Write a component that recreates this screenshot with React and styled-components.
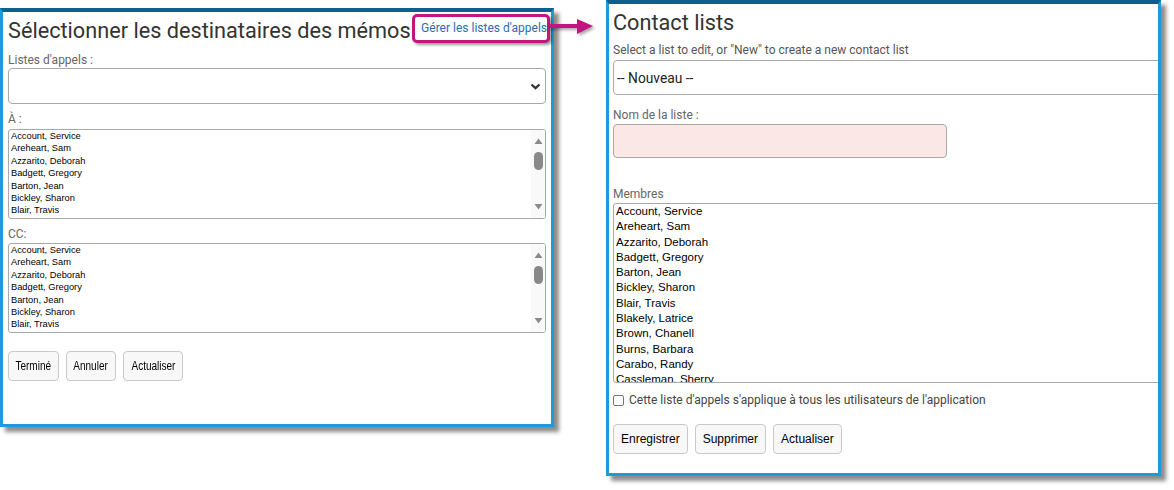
import React from "react";
import styled, { createGlobalStyle } from "styled-components";

const Global = createGlobalStyle`
  html, body { margin: 0; padding: 0; background: #fff; }
  * { box-sizing: border-box; }
`;

const Canvas = styled.div`
  position: relative;
  width: 1174px;
  height: 490px;
  display: flex;
  align-items: flex-start;
  overflow: hidden;
  font-family: Roboto, "Liberation Sans", sans-serif;
`;

const Panel = styled.section`
  display: flex;
  flex-direction: column;
  align-items: flex-start;
  width: ${(p) => p.$w}px;
  height: ${(p) => p.$h}px;
  margin-top: ${(p) => p.$top}px;
  margin-left: ${(p) => p.$left}px;
  padding: 0 ${(p) => p.$padR}px 0 ${(p) => p.$padL}px;
  background: #fff;
  border: 3px solid #1c9bd8;
  border-top: 4px solid #0d5f8e;
  box-shadow: 5px 5px 4px rgba(0, 0, 0, 0.45);
  overflow: ${(p) => (p.$clip ? "hidden" : "visible")};
`;

const Header = styled.div`
  display: flex;
  justify-content: space-between;
  align-items: flex-start;
  align-self: stretch;
`;

const Title = styled.h1`
  margin: ${(p) => p.$mt}px 0 0 0;
  font-family: Roboto, sans-serif;
  font-weight: 400;
  font-size: 21.7px;
  line-height: 27px;
  color: #333;
  white-space: nowrap;
`;

const Highlight = styled.span`
  display: inline-block;
  margin: 2px -4px 0 0;
  padding: 0 0 4px 6px;
  border: 3px solid #c3157f;
  border-radius: 5px;
  box-shadow: 2px 2px 3px rgba(0, 0, 0, 0.4);
  background: #fff;
  position: relative;
  z-index: 2;
`;

const Link = styled.a`
  font-family: Roboto, sans-serif;
  font-size: 12px;
  line-height: 14px;
  color: #2a6db5;
  text-decoration: none;
  white-space: nowrap;
`;

const Label = styled.div`
  margin-top: ${(p) => p.$mt}px;
  font-family: Roboto, sans-serif;
  font-size: 12px;
  line-height: 15px;
  color: ${(p) => p.$color || "#666"};
  white-space: nowrap;
`;

const Select = styled.div`
  margin-top: ${(p) => p.$mt}px;
  width: ${(p) => p.$w}px;
  height: ${(p) => p.$h}px;
  flex-shrink: 0;
  display: flex;
  align-items: center;
  justify-content: space-between;
  padding: 0 4px 0 3px;
  border: 1px solid #a9a9a9;
  border-radius: 4px;
  background: #fff;
  font-family: Roboto, sans-serif;
  font-size: 13.8px;
  color: #222;
`;

const TextInput = styled.div`
  margin-top: ${(p) => p.$mt}px;
  width: ${(p) => p.$w}px;
  height: ${(p) => p.$h}px;
  flex-shrink: 0;
  border: 1px solid #a9a9a9;
  border-radius: 4px;
  background: #fbe7e5;
`;

const ListBox = styled.div`
  margin-top: ${(p) => p.$mt}px;
  width: ${(p) => p.$w}px;
  height: ${(p) => p.$h}px;
  flex-shrink: 0;
  display: flex;
  border: 1px solid #a9a9a9;
  border-radius: 3px;
  background: #fff;
  overflow: hidden;
`;

const Items = styled.div`
  flex: 1;
  padding-left: 2px;
  overflow: hidden;
  font-family: "Liberation Sans", Arial, sans-serif;
  font-size: ${(p) => p.$fs}px;
  line-height: ${(p) => p.$lh}px;
  color: #000;
`;

const Item = styled.div`
  white-space: nowrap;
`;

const Track = styled.div`
  width: 14px;
  display: flex;
  flex-direction: column;
  align-items: center;
  padding: 8px 0 8px 0;
  background: #f9f9f9;
`;

const Thumb = styled.div`
  width: 9px;
  height: 18px;
  margin-top: 8px;
  border-radius: 5px;
  background: #898989;
`;

const Spacer = styled.div`
  flex: 1;
`;

const ButtonRow = styled.div`
  margin-top: ${(p) => p.$mt}px;
  display: flex;
  gap: 7px;
`;

const Button = styled.button`
  height: 30px;
  ${(p) => (p.$w ? `width: ${p.$w}px;` : "")}
  padding: 0 ${(p) => p.$px}px;
  display: flex;
  align-items: center;
  justify-content: center;
  border: 1px solid #c9c9c9;
  border-radius: 4px;
  background: #f8f8f8;
  color: #000;
  font-family: "Liberation Sans", Arial, sans-serif;
  font-size: ${(p) => p.$fs}px;
  cursor: pointer;
`;

const Squeezed = styled.span`
  display: inline-block;
  white-space: nowrap;
  transform: scaleX(0.8);
`;

const CheckRow = styled.label`
  margin-top: ${(p) => p.$mt}px;
  display: flex;
  align-items: center;
  gap: 5px;
  font-family: Roboto, sans-serif;
  font-size: 12px;
  line-height: 15px;
  color: #444;
  white-space: nowrap;
`;

const Check = styled.input`
  appearance: none;
  width: 11px;
  height: 11px;
  margin: 0;
  border: 1px solid #767676;
  border-radius: 2px;
  background: #fff;
`;

const Arrow = styled.svg`
  position: absolute;
  left: 548px;
  top: 18px;
  filter: drop-shadow(2px 2px 1.5px rgba(0, 0, 0, 0.35));
  z-index: 3;
`;

const names = [
  "Account, Service",
  "Areheart, Sam",
  "Azzarito, Deborah",
  "Badgett, Gregory",
  "Barton, Jean",
  "Bickley, Sharon",
  "Blair, Travis",
  "Blakely, Latrice",
  "Brown, Chanell",
  "Burns, Barbara",
  "Carabo, Randy",
  "Cassleman, Sherry",
];

const Chevron = () => (
  <svg width="11" height="7" viewBox="0 0 11 7">
    <polyline points="1.5,1.5 5.5,5.2 9.5,1.5" fill="none" stroke="#333" strokeWidth="2.3" />
  </svg>
);

const Tri = ({ up }) => (
  <svg width="9" height="6" viewBox="0 0 9 6">
    <polygon points={up ? "0.5,6 4.5,0.5 8.5,6" : "0.5,0 4.5,5.5 8.5,0"} fill="#8a8a8a" />
  </svg>
);

const SmallList = ({ mt }) => (
  <ListBox $mt={mt} $w={538} $h={90}>
    <Items $fs={9.3} $lh={12.4}>
      {names.slice(0, 7).map((n) => (
        <Item key={n}>{n}</Item>
      ))}
    </Items>
    <Track>
      <Tri up />
      <Thumb />
      <Spacer />
      <Tri />
    </Track>
  </ListBox>
);

export default function App() {
  return (
    <>
      <Global />
      <Canvas>
        <Panel $w={554} $h={419} $top={8} $left={0} $padL={5} $padR={5}>
          <Header>
            <Title $mt={5}>Sélectionner les destinataires des mémos</Title>
            <Highlight>
              <Link href="#">Gérer les listes d'appels</Link>
            </Highlight>
          </Header>
          <Label $mt={9}>Listes d'appels :</Label>
          <Select $mt={0} $w={538} $h={36}>
            <span />
            <Chevron />
          </Select>
          <Label $mt={8}>À :</Label>
          <SmallList mt={2} />
          <Label $mt={8}>CC:</Label>
          <SmallList mt={1} />
          <ButtonRow $mt={18}>
            <Button $w={51} $px={0} $fs={12.5}><Squeezed>Terminé</Squeezed></Button>
            <Button $w={50} $px={0} $fs={12.5}><Squeezed>Annuler</Squeezed></Button>
            <Button $w={60} $px={0} $fs={12.5}><Squeezed>Actualiser</Squeezed></Button>
          </ButtonRow>
        </Panel>

        <Panel $w={555} $h={476} $top={0} $left={52} $padL={4} $padR={0} $clip>
          <Title $mt={5}>Contact lists</Title>
          <Label $mt={7} $color="#555">
            Select a list to edit, or "New" to create a new contact list
          </Label>
          <Select $mt={2} $w={600} $h={35}>
            <span>-- Nouveau --</span>
          </Select>
          <Label $mt={13}>Nom de la liste :</Label>
          <TextInput $mt={1} $w={334} $h={34} />
          <Label $mt={29}>Membres</Label>
          <ListBox $mt={1} $w={600} $h={180}>
            <Items $fs={11.5} $lh={15.3}>
              {names.map((n) => (
                <Item key={n}>{n}</Item>
              ))}
            </Items>
          </ListBox>
          <CheckRow $mt={10}>
            <Check type="checkbox" />
            Cette liste d'appels s'applique à tous les utilisateurs de l'application
          </CheckRow>
          <ButtonRow $mt={16}>
            <Button $px={7} $fs={12}>Enregistrer</Button>
            <Button $px={7} $fs={12}>Supprimer</Button>
            <Button $px={7} $fs={12}>Actualiser</Button>
          </ButtonRow>
        </Panel>

        <Arrow width="46" height="17" viewBox="0 0 46 17">
          <rect x="0" y="6" width="31" height="4" fill="#c3157f" />
          <polygon points="29,1 45,8 29,16" fill="#c3157f" />
        </Arrow>
      </Canvas>
    </>
  );
}
